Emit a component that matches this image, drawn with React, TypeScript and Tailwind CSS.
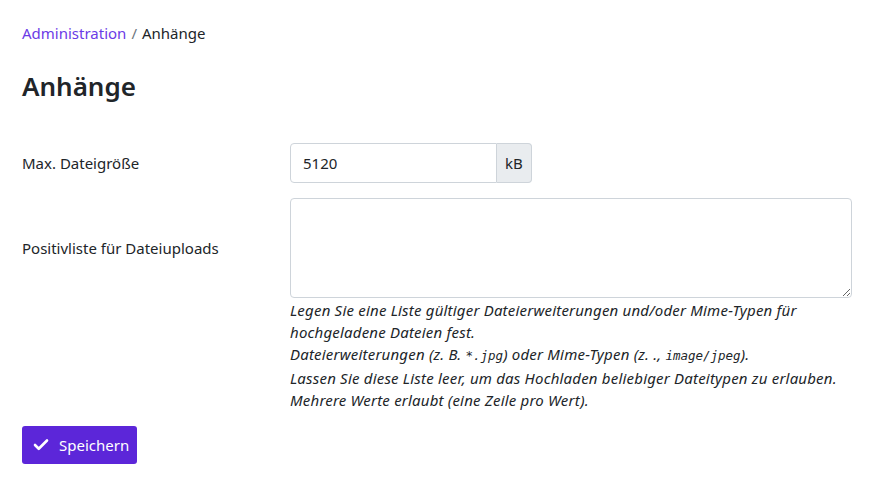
import { Check } from "lucide-react";

export default function App() {
  return (
    <div className="min-h-screen bg-white px-[22px] pr-[20px] text-[15px] text-[#212529] font-['Noto_Sans',sans-serif]">
      {/* Breadcrumb */}
      <nav className="pt-[22px] leading-[22px]">
        <span className="text-[#6b3be6]">Administration</span>
        <span className="px-[5px] text-[#6c757d]">/</span>
        <span>Anhänge</span>
      </nav>

      <h1 className="mt-[26px] text-[26px] font-semibold leading-[32px]">Anhänge</h1>

      <form className="mt-[41px] grid grid-cols-[268px_1fr] items-center">
        <label className="leading-[22px]">Max. Dateigröße</label>
        <div className="flex">
          <input
            defaultValue="5120"
            className="h-[40px] w-[207px] rounded-l-[4px] border border-[#ced4da] px-[12px] outline-none"
          />
          <span className="flex h-[40px] items-center rounded-r-[4px] border border-l-0 border-[#ced4da] bg-[#e9ecef] px-[8px]">
            kB
          </span>
        </div>

        <label className="mt-[15px] leading-[22px]">Positivliste für Dateiuploads</label>
        <textarea className="mt-[15px] h-[100px] w-full rounded-[4px] border border-[#ced4da] px-[12px] py-[6px] outline-none" />

        <div />
        <div className="pt-[1px] italic leading-[22px] tracking-[0.2px]">
          <p>
            Legen Sie eine Liste gültiger Dateierweiterungen und/oder Mime-Typen für
            <br />
            hochgeladene Dateien fest.
          </p>
          <p>
            Dateierweiterungen (z. B. <code className="font-['DejaVu_Sans_Mono',monospace] text-[12.5px] tracking-normal">*.jpg</code>) oder Mime-Typen (z. .,{" "}
            <code className="font-['DejaVu_Sans_Mono',monospace] text-[12.5px] tracking-normal">image/jpeg</code>).
          </p>
          <p>Lassen Sie diese Liste leer, um das Hochladen beliebiger Dateitypen zu erlauben.</p>
          <p>Mehrere Werte erlaubt (eine Zeile pro Wert).</p>
        </div>
      </form>

      <button className="mt-[15px] flex h-[38px] items-center gap-[9px] rounded-[3px] bg-[#5c26d9] pl-[10px] pr-[8px] text-white">
        <Check size={18} strokeWidth={3.5} />
        <span>Speichern</span>
      </button>
    </div>
  );
}
